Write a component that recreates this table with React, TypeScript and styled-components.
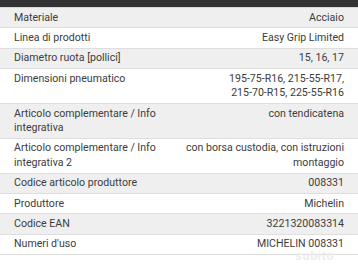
import React from 'react';
import styled, { createGlobalStyle } from 'styled-components';

const GlobalStyle = createGlobalStyle`
  html, body {
    margin: 0;
    padding: 0;
    background: #fff;
  }
  body {
    font-family: Roboto, "Noto Sans", sans-serif;
  }
`;

const Page = styled.div`
  position: relative;
  width: 358px;
  height: 270px;
  overflow: hidden;
  background: #fff;
`;

const TopBar = styled.div`
  height: 7px;
  background: #323232;
  border-bottom: 1px solid #d8d8d8;
`;

const Table = styled.div`
  display: flex;
  flex-direction: column;
`;

const Row = styled.div<{ $shaded: boolean }>`
  display: grid;
  grid-template-columns: 1fr 1fr;
  column-gap: 10px;
  padding: 2.5px 14px;
  background: ${p => (p.$shaded ? '#efefef' : '#fff')};
  border-bottom: 1px solid #dedede;
  font-size: 10.6px;
  line-height: 14.4px;
  color: #3c3c3c;
`;

const Label = styled.div``;

const Value = styled.div`
  text-align: right;
`;

// keeps a tyre size like 215-70-R15 from breaking at its hyphens
const Item = styled.span`
  white-space: nowrap;
`;

const Watermark = styled.div`
  position: absolute;
  right: 24px;
  bottom: 7px;
  font-family: "Liberation Sans", sans-serif;
  font-size: 12px;
  font-weight: bold;
  color: #ececec;
  letter-spacing: 0.5px;
`;

const rows: [string, string][] = [
  ['Materiale', 'Acciaio'],
  ['Linea di prodotti', 'Easy Grip Limited'],
  ['Diametro ruota [pollici]', '15, 16, 17'],
  ['Dimensioni pneumatico', '195-75-R16, 215-55-R17, 215-70-R15, 225-55-R16'],
  ['Articolo complementare / Info integrativa', 'con tendicatena'],
  ['Articolo complementare / Info integrativa 2', 'con borsa custodia, con istruzioni montaggio'],
  ['Codice articolo produttore', '008331'],
  ['Produttore', 'Michelin'],
  ['Codice EAN', '3221320083314'],
  ["Numeri d'uso", 'MICHELIN 008331'],
];

const renderValue = (value: string) => {
  if (!/R\d/.test(value)) return value;
  const parts = value.split(', ');
  return parts.map((p, i) => (
    <React.Fragment key={p}>
      <Item>{i < parts.length - 1 ? p + ',' : p}</Item>
      {i < parts.length - 1 ? ' ' : null}
    </React.Fragment>
  ));
};

const App: React.FC = () => {
  return (
    <Page>
      <GlobalStyle />
      <TopBar />
      <Table>
        {rows.map(([label, value], i) => (
          <Row key={label} $shaded={i % 2 === 0}>
            <Label>{label}</Label>
            <Value>{renderValue(value)}</Value>
          </Row>
        ))}
      </Table>
      <Watermark>subito</Watermark>
    </Page>
  );
};

export default App;
